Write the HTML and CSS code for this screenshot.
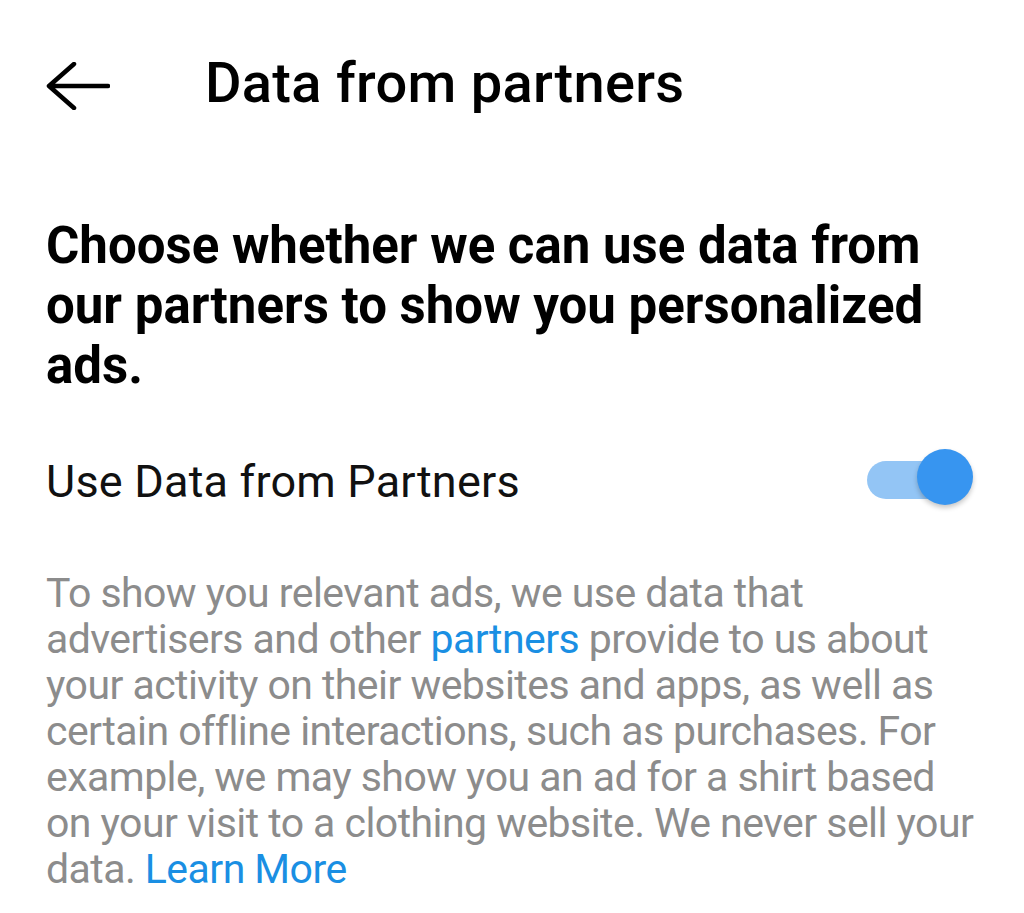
FILE: index.html
```html
<!DOCTYPE html>
<html lang="en">
<head>
    <meta charset="UTF-8">
    <meta name="viewport" content="width=device-width, initial-scale=1.0">
    <title>Data from partners</title>
    <link rel="stylesheet" href="styles.css">
</head>
<body>
    <div class="header">
        <button class="back-button" aria-label="Back">
            <svg width="64" height="48" viewBox="0 0 64 48">
                <path d="M3 24 H62 M28 2 L3 24 L28 46" fill="none" stroke="#000" stroke-width="4.5" stroke-linecap="round" stroke-linejoin="round"/>
            </svg>
        </button>
        <h1 class="title">Data from partners</h1>
    </div>

    <div class="content">
        <h2 class="heading">Choose whether we can use data from our partners to show you personalized ads.</h2>

        <div class="setting-row">
            <span class="setting-label">Use Data from Partners</span>
            <div class="switch switch-on">
                <div class="switch-track"></div>
                <div class="switch-thumb"></div>
            </div>
        </div>

        <p class="description">To show you relevant ads, we use data that advertisers and other <a href="#" class="link">partners</a> provide to us about your activity on their websites and apps, as well as certain offline interactions, such as purchases. For example, we may show you an ad for a shirt based on your visit to a clothing website. We never sell your data. <a href="#" class="link">Learn More</a></p>
    </div>
</body>
</html>
```

FILE: styles.css
```css
body {
    margin: 0;
    background: #ffffff;
    font-family: 'Roboto', 'Liberation Sans', sans-serif;
    color: #000;
}
.header {
    display: flex;
    align-items: flex-start;
    padding: 55px 0 0 46px;
}
.back-button {
    background: none;
    border: none;
    padding: 0;
    margin: 7px 95px 0 0;
    display: flex;
    cursor: pointer;
}
.title {
    margin: 0;
    font-size: 56px;
    line-height: 56px;
    font-weight: 500;
    letter-spacing: 0.3px;
}
.content {
    padding: 105px 42px 0 46px;
}
.heading {
    margin: 0;
    font-size: 51px;
    font-weight: 700;
    line-height: 60px;
}
.setting-row {
    display: flex;
    align-items: center;
    justify-content: space-between;
    margin-top: 58px;
}
.setting-label {
    font-size: 45px;
    line-height: 56px;
    color: #111;
    letter-spacing: 0.2px;
}
.switch {
    position: relative;
    width: 106px;
    height: 57px;
    margin: -10px 9px 0 0;
}
.switch-track {
    position: absolute;
    left: 0;
    top: 12px;
    width: 86px;
    height: 38px;
    border-radius: 19px;
    background: #93c5f5;
}
.switch-thumb {
    position: absolute;
    right: 0;
    top: 0;
    width: 56px;
    height: 56px;
    border-radius: 50%;
    background: #3795f0;
    box-shadow: 0 3px 5px rgba(0, 0, 0, 0.22);
}
.description {
    margin: 60px 0 0 0;
    font-size: 41px;
    line-height: 46px;
    color: #8c8c8c;
    letter-spacing: -0.55px;
}
.link {
    color: #1a8fe3;
    text-decoration: none;
}
```
